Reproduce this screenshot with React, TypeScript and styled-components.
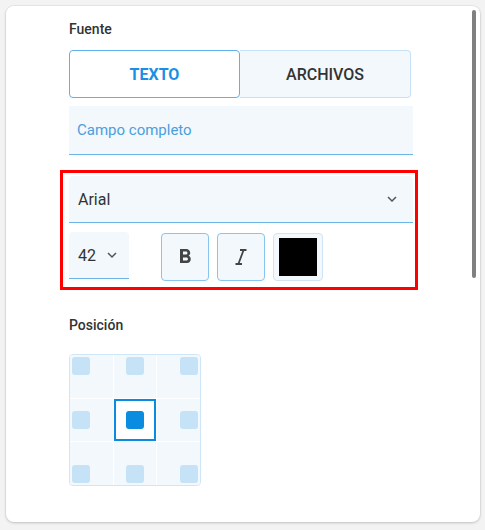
import React, { useState } from 'react';
import styled, { createGlobalStyle } from 'styled-components';
import { MdExpandMore, MdFormatBold } from 'react-icons/md';

const GlobalStyle = createGlobalStyle`
  body {
    margin: 0;
    background: #f3f3f3;
    font-family: Roboto, "Liberation Sans", Arial, sans-serif;
  }
`;

const Card = styled.div`
  position: relative;
  margin: 6px;
  width: 474px;
  height: 516px;
  padding: 2px;
  box-sizing: border-box;
  background: #fff;
  border-radius: 8px;
  box-shadow: 0 1px 3px rgba(0, 0, 0, 0.18), 0 0 0 1px rgba(0, 0, 0, 0.04);
`;

const Scroller = styled.div`
  height: 100%;
  overflow: hidden;
`;

// scrollbar thumb drawn over the card edge
const ScrollThumb = styled.div`
  position: absolute;
  top: 4px;
  right: 4px;
  width: 4px;
  height: 268px;
  border-radius: 2px;
  background: #808080;
`;

const Panel = styled.div`
  padding: 11px 0 0 61px;
  width: 344px;
  min-height: 950px;
`;

const Label = styled.div<{ $gap?: number }>`
  margin-top: ${({ $gap }) => $gap ?? 0}px;
  font-size: 14px;
  line-height: 20px;
  font-weight: 500;
  color: #333;
`;

const Tabs = styled.div`
  margin-top: 11px;
  display: grid;
  grid-template-columns: 1fr 1fr;
  width: 342px;
  height: 48px;
`;

const Tab = styled.button<{ $active?: boolean }>`
  font-family: inherit;
  font-size: 16px;
  font-weight: ${({ $active }) => ($active ? 700 : 500)};
  color: ${({ $active }) => ($active ? '#1a8fe3' : '#333')};
  background: ${({ $active }) => ($active ? '#fff' : '#f2f8fc')};
  border: ${({ $active }) => ($active ? '1.5px solid #5eb1ec' : '1px solid #c7e2f6')};
  border-radius: ${({ $active }) => ($active ? '4px' : '0 4px 4px 0')};
  border-left: ${({ $active }) => ($active ? undefined : 'none')};
  cursor: pointer;
  padding: 0;
`;

const TextField = styled.div`
  margin-top: 8px;
  height: 48px;
  display: flex;
  align-items: center;
  padding-left: 8px;
  background: #f2f8fc;
  border-bottom: 1px solid #6ab4e8;
  font-size: 15px;
  color: #4a9fdc;
`;

const Highlight = styled.div`
  position: relative;
  margin-top: 21px;

  &::after {
    content: '';
    position: absolute;
    inset: -6px -5px -9px -9px;
    border: 3px solid #ff0000;
    pointer-events: none;
  }
`;

const Select = styled.div<{ $width?: number; $padRight?: number }>`
  width: ${({ $width }) => ($width ? `${$width}px` : 'auto')};
  height: 46px;
  box-sizing: content-box;
  display: flex;
  align-items: center;
  justify-content: space-between;
  padding: 0 ${({ $padRight }) => $padRight ?? 12}px 0 9px;
  background: #f2f8fc;
  border-radius: 4px 4px 0 0;
  border-bottom: 1px solid #6ab4e8;
  font-size: 16px;
  color: #333;

  svg {
    color: #555;
    flex-shrink: 0;
  }
`;

const StyleRow = styled.div`
  margin-top: 9px;
  display: flex;
  align-items: flex-start;
`;

const Buttons = styled.div`
  margin-left: 32px;
  margin-top: 1px;
  display: flex;
  gap: 8px;
`;

const StyleButton = styled.button<{ $soft?: boolean }>`
  width: ${({ $soft }) => ($soft ? 50 : 48)}px;
  height: 48px;
  padding: 0;
  display: flex;
  align-items: center;
  justify-content: center;
  background: #f2f8fc;
  border: 1px solid ${({ $soft }) => ($soft ? '#cfe5f6' : '#86c5ef')};
  border-radius: 4px;
  color: #444;
  cursor: pointer;
`;

const Swatch = styled.span<{ $color: string }>`
  width: 38px;
  height: 38px;
  background: ${({ $color }) => $color};
`;

const PosGrid = styled.div`
  margin-top: 19px;
  width: 130px;
  height: 130px;
  display: grid;
  grid-template-columns: repeat(3, 1fr);
  grid-template-rows: repeat(3, 1fr);
  gap: 1px;
  background: #fff;
  border: 1px solid #cfe6f7;
  border-radius: 4px;
  overflow: hidden;
`;

const PosCell = styled.div<{ $h: string; $v: string; $selected?: boolean }>`
  display: flex;
  justify-content: ${({ $h }) => $h};
  align-items: ${({ $v }) => $v};
  padding: 2px;
  background: ${({ $selected }) => ($selected ? '#fff' : '#f2f8fc')};
  box-shadow: ${({ $selected }) => ($selected ? 'inset 0 0 0 2px #0a8ae0' : 'none')};
  cursor: pointer;
`;

const Dot = styled.span<{ $selected?: boolean }>`
  width: 18px;
  height: 18px;
  border-radius: 3px;
  background: ${({ $selected }) => ($selected ? '#0a8ce0' : '#c5e2f6')};
`;

const ItalicIcon = () => (
  <svg width="24" height="24" viewBox="0 0 24 24" fill="none" stroke="currentColor" strokeWidth="1.8">
    <path d="M11 5h6.5M6.5 19H13M14.6 5l-5.2 14" />
  </svg>
);

const places = ['flex-start', 'center', 'flex-end'];

export default function App() {
  const [tab, setTab] = useState('texto');
  const [pos, setPos] = useState(4);

  return (
    <>
      <GlobalStyle />
      <Card>
        <Scroller>
          <Panel>
            <Label>Fuente</Label>
            <Tabs>
              <Tab $active={tab === 'texto'} onClick={() => setTab('texto')}>TEXTO</Tab>
              <Tab $active={tab === 'archivos'} onClick={() => setTab('archivos')}>ARCHIVOS</Tab>
            </Tabs>
            <TextField>Campo completo</TextField>

            <Highlight>
              <Select>
                <span>Arial</span>
                <MdExpandMore size={18} />
              </Select>
              <StyleRow>
                <Select $width={43} $padRight={8}>
                  <span>42</span>
                  <MdExpandMore size={18} />
                </Select>
                <Buttons>
                  <StyleButton><MdFormatBold size={24} /></StyleButton>
                  <StyleButton><ItalicIcon /></StyleButton>
                  <StyleButton $soft><Swatch $color="#000" /></StyleButton>
                </Buttons>
              </StyleRow>
            </Highlight>

            <Label $gap={34}>Posición</Label>
            <PosGrid>
              {Array.from({ length: 9 }).map((_, i) => (
                <PosCell
                  key={i}
                  $h={places[i % 3]}
                  $v={places[Math.floor(i / 3)]}
                  $selected={pos === i}
                  onClick={() => setPos(i)}
                >
                  <Dot $selected={pos === i} />
                </PosCell>
              ))}
            </PosGrid>
          </Panel>
        </Scroller>
        <ScrollThumb />
      </Card>
    </>
  );
}
